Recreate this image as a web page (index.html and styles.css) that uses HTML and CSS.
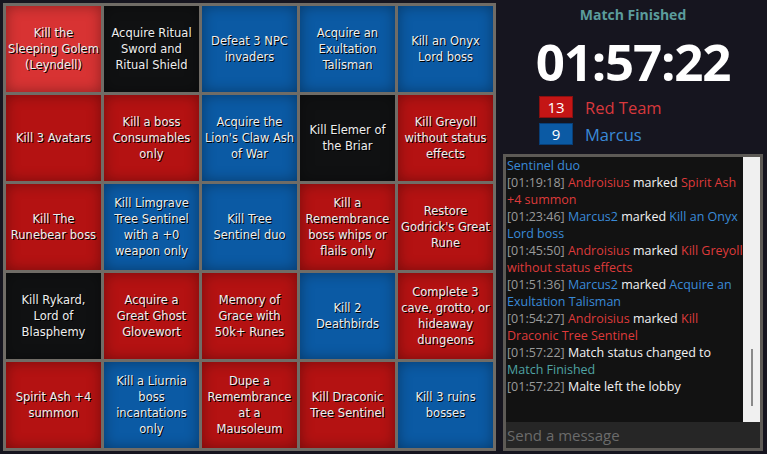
FILE: index.html
```html
<!DOCTYPE html>
<html>
<head>
<meta charset="utf-8">
<link rel="stylesheet" href="styles.css">
</head>
<body>
<div class="page">
  <div class="board">
    <div class="cell hot"><span>Kill the Sleeping Golem (Leyndell)</span></div>
    <div class="cell black"><span>Acquire Ritual Sword and Ritual Shield</span></div>
    <div class="cell blue"><span>Defeat 3 NPC invaders</span></div>
    <div class="cell blue"><span>Acquire an Exultation Talisman</span></div>
    <div class="cell blue"><span>Kill an Onyx Lord boss</span></div>

    <div class="cell red"><span>Kill 3 Avatars</span></div>
    <div class="cell red"><span>Kill a boss Consumables only</span></div>
    <div class="cell blue"><span>Acquire the Lion's Claw Ash of War</span></div>
    <div class="cell black"><span>Kill Elemer of the Briar</span></div>
    <div class="cell red"><span>Kill Greyoll without status effects</span></div>

    <div class="cell red"><span>Kill The Runebear boss</span></div>
    <div class="cell blue"><span>Kill Limgrave Tree Sentinel with a +0 weapon only</span></div>
    <div class="cell blue"><span>Kill Tree Sentinel duo</span></div>
    <div class="cell red"><span>Kill a Remembrance boss whips or flails only</span></div>
    <div class="cell red"><span>Restore Godrick's Great Rune</span></div>

    <div class="cell black"><span>Kill Rykard,<br>Lord of Blasphemy</span></div>
    <div class="cell red"><span>Acquire a<br>Great Ghost Glovewort</span></div>
    <div class="cell red"><span>Memory of Grace with 50k+ Runes</span></div>
    <div class="cell blue"><span>Kill 2 Deathbirds</span></div>
    <div class="cell red"><span>Complete 3 cave, grotto, or hideaway dungeons</span></div>

    <div class="cell red"><span>Spirit Ash +4 summon</span></div>
    <div class="cell blue"><span>Kill a Liurnia boss incantations only</span></div>
    <div class="cell red"><span>Dupe a Remembrance at a<br>Mausoleum</span></div>
    <div class="cell red"><span>Kill Draconic Tree Sentinel</span></div>
    <div class="cell blue"><span>Kill 3 ruins bosses</span></div>
  </div>

  <div class="side">
    <div class="status">Match Finished</div>
    <div class="timer">01:57:22</div>
    <div class="scores">
      <div class="score"><span class="count c-red">13</span><span class="team t-red">Red Team</span></div>
      <div class="score"><span class="count c-blue">9</span><span class="team t-blue">Marcus</span></div>
    </div>
    <div class="chat">
      <div class="chat-body">
        <div class="log">
          <div class="msg"><span class="b">Sentinel duo</span></div>
          <div class="msg"><span class="ts">[01:19:18]</span> <span class="r">Androisius</span> marked <span class="r">Spirit Ash +4 summon</span></div>
          <div class="msg"><span class="ts">[01:23:46]</span> <span class="b">Marcus2</span> marked <span class="b">Kill an Onyx Lord boss</span></div>
          <div class="msg"><span class="ts">[01:45:50]</span> <span class="r">Androisius</span> marked <span class="r">Kill Greyoll without status effects</span></div>
          <div class="msg"><span class="ts">[01:51:36]</span> <span class="b">Marcus2</span> marked <span class="b">Acquire an Exultation Talisman</span></div>
          <div class="msg"><span class="ts">[01:54:27]</span> <span class="r">Androisius</span> marked <span class="r">Kill Draconic Tree Sentinel</span></div>
          <div class="msg"><span class="ts">[01:57:22]</span> Match status changed to <span class="g">Match Finished</span></div>
          <div class="msg"><span class="ts">[01:57:22]</span> Malte left the lobby</div>
        </div>
        <div class="scroll"><div class="thumb"></div></div>
      </div>
      <div class="input">Send a message</div>
    </div>
  </div>
</div>
</body>
</html>
```

FILE: styles.css
```css
* { box-sizing: border-box; }
html, body { margin: 0; padding: 0; }
body {
  background: #16151f;
  width: 767px;
  height: 454px;
  overflow: hidden;
  font-family: "Open Sans", "Noto Sans", sans-serif;
}
.page {
  display: flex;
  padding: 3px;
  gap: 7px;
}
.board {
  display: grid;
  grid-template-columns: repeat(5, 95px);
  grid-template-rows: repeat(5, 86px);
  gap: 3px;
  padding: 3px;
  background: #706c66;
  width: 493px;
  height: 448px;
  flex: none;
}
.cell {
  display: flex;
  align-items: center;
  justify-content: center;
  text-align: center;
  padding: 0 1px;
  color: #eeeeee;
  font-family: "DejaVu Sans", sans-serif;
  font-size: 11.5px;
  line-height: 16px;
  text-shadow: 1px 1px 0 #000;
  box-shadow: inset 0 0 14px rgba(0,0,0,0.35);
}
.red { background: #b41212; }
.hot { background: #d83333; }
.blue { background: #0b5aa4; }
.black { background: #101112; }

.side {
  width: 260px;
  flex: none;
  display: flex;
  flex-direction: column;
  align-items: center;
}
.status {
  margin-top: 3px;
  color: #5b9c9c;
  font-weight: bold;
  font-size: 14px;
  line-height: 18px;
}
.timer {
  color: #fff;
  font-weight: bold;
  font-size: 51px;
  line-height: 58px;
  margin-top: 8px;
  letter-spacing: -1.2px;
}
.scores {
  align-self: stretch;
  padding-left: 36px;
  display: flex;
  flex-direction: column;
  gap: 5px;
  margin-top: 6px;
}
.score {
  display: flex;
  align-items: center;
  height: 22px;
}
.count {
  width: 34px;
  height: 22px;
  display: flex;
  align-items: center;
  justify-content: center;
  color: #fff;
  font-size: 15px;
}
.c-red { background: #c41515; border: 1px solid #8a1010; }
.c-blue { background: #0b5aa4; border: 1px solid #083f78; }
.team {
  margin-left: 12px;
  font-size: 16.5px;
}
.t-red { color: #d8383c; }
.t-blue { color: #3a8ad8; }

.chat {
  margin-top: 9px;
  align-self: stretch;
  height: 297px;
  border: 3px solid #5d5a56;
  background: #121212;
  display: flex;
  flex-direction: column;
}
.chat-body {
  flex: 1;
  display: flex;
  min-height: 0;
}
.log {
  flex: 1;
  padding-left: 1px;
  font-size: 12.5px;
  line-height: 17px;
  color: #f2f2f2;
  overflow: hidden;
}
.ts { color: #9a9a9a; }
.r { color: #de3a3a; }
.b { color: #3a8ad8; }
.g { color: #4fa3a3; }
.scroll {
  width: 17px;
  background: #f0f0f0;
  position: relative;
}
.thumb {
  position: absolute;
  left: 8px;
  top: 192px;
  width: 2px;
  height: 57px;
  background: #8a8a8a;
}
.input {
  height: 26px;
  background: #262626;
  color: #6b6b6b;
  font-size: 15px;
  line-height: 26px;
  padding-left: 1px;
}
```
